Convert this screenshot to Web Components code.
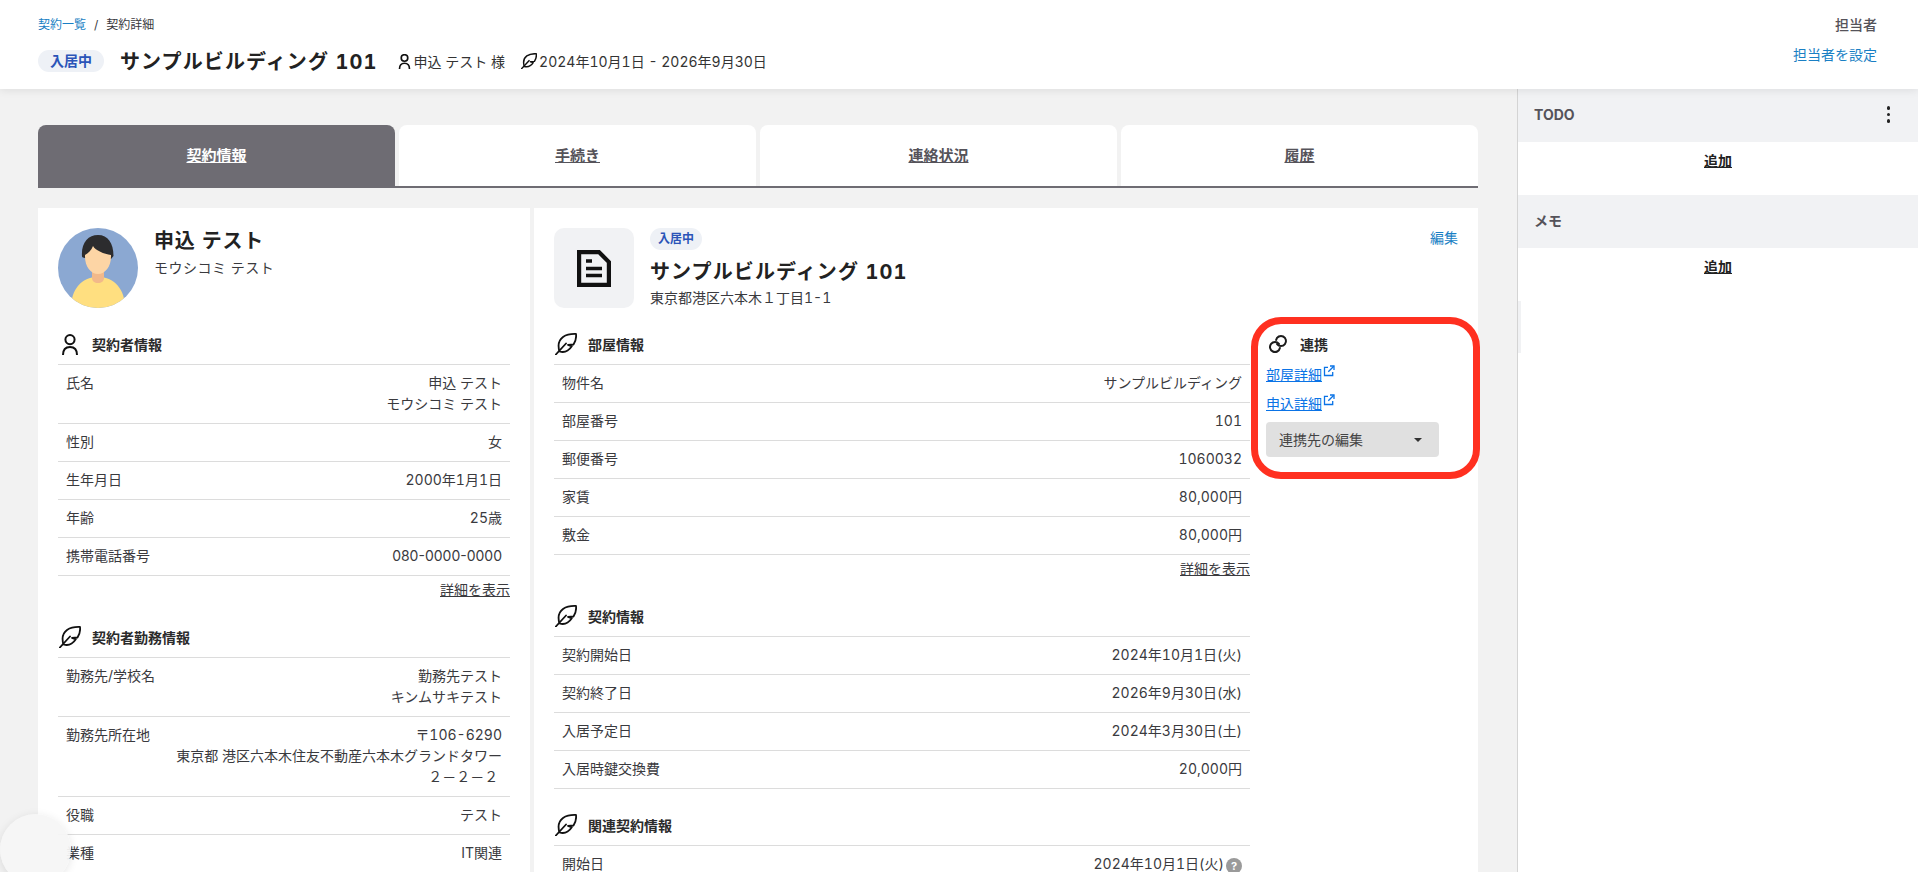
<!DOCTYPE html>
<html lang="ja">
<head>
<meta charset="utf-8">
<title>契約詳細</title>
<style>
  html, body {
    margin: 0;
    height: 100%;
    overflow: hidden;
    font-family: Inter, "Noto Sans CJK JP", sans-serif;
    font-feature-settings: "tnum";
    font-variant-numeric: tabular-nums;
    font-size: 14px;
    line-height: 21px;
    color: #3a3a3e;
    background: #f2f2f2;
  }
  .phone { font-feature-settings: normal; font-variant-numeric: normal; }
</style>
</head>
<body>
<contract-page>
  <page-header slot="header"></page-header>

  <tab-bar slot="tabs">
    <tab-item active>契約情報</tab-item>
    <tab-item>手続き</tab-item>
    <tab-item>連絡状況</tab-item>
    <tab-item>履歴</tab-item>
  </tab-bar>

  <person-card slot="person">
    <info-section title="契約者情報" icon="person">
      <info-row label="氏名">申込 テスト<br>モウシコミ テスト</info-row>
      <info-row label="性別">女</info-row>
      <info-row label="生年月日">2000年1月1日</info-row>
      <info-row label="年齢">25歳</info-row>
      <info-row label="携帯電話番号"><span class="phone">080-0000-0000</span></info-row>
      <more-link slot="more">詳細を表示</more-link>
    </info-section>
    <info-section title="契約者勤務情報" icon="feather">
      <info-row label="勤務先/学校名">勤務先テスト<br>キンムサキテスト</info-row>
      <info-row label="勤務先所在地">〒106-6290<br>東京都 港区六本木住友不動産六本木グランドタワー<br>２－２－２&nbsp;</info-row>
      <info-row label="役職">テスト</info-row>
      <info-row label="業種">IT関連</info-row>
    </info-section>
  </person-card>

  <room-card slot="room">
    <info-section title="部屋情報" icon="feather">
      <info-row label="物件名">サンプルビルディング</info-row>
      <info-row label="部屋番号">101</info-row>
      <info-row label="郵便番号">1060032</info-row>
      <info-row label="家賃">80,000円</info-row>
      <info-row label="敷金">80,000円</info-row>
      <more-link slot="more">詳細を表示</more-link>
    </info-section>
    <info-section title="契約情報" icon="feather">
      <info-row label="契約開始日">2024年10月1日(火)</info-row>
      <info-row label="契約終了日">2026年9月30日(水)</info-row>
      <info-row label="入居予定日">2024年3月30日(土)</info-row>
      <info-row label="入居時鍵交換費">20,000円</info-row>
    </info-section>
    <info-section title="関連契約情報" icon="feather">
      <info-row label="開始日">2024年10月1日(火)<help-mark></help-mark></info-row>
    </info-section>
    <link-panel slot="links"></link-panel>
  </room-card>

  <side-panel slot="side"></side-panel>
</contract-page>
<float-button></float-button>

<script>
const featherPaths = `
  <path d="M.8 21.500 11 10.500"/>
  <path d="M4.500 18.500C2.500 12 4 7 8 4c4-2.700 8.500-3.200 13-3 .5 4-.5 7.500-2.500 10.500L13 12l3.800 1.300C14 17.500 9.500 20 4.500 18.500z"/>
`
const personPaths = `
  <circle cx="8" cy="5.600" r="4.600"/>
  <path d="M1 21c0-5.300 2.600-8 7-8s7 2.700 7 8"/>
`

const icons = {
  person: `<svg width="16" height="21" viewBox="0 0 16 21" fill="none" stroke="#111" stroke-width="2">${personPaths}</svg>`,
  feather: `<svg width="22" height="22" viewBox="0 0 22 22" fill="none" stroke="#111" stroke-width="1.800" stroke-linejoin="round" stroke-linecap="round">${featherPaths}</svg>`,
  small: `<svg width="16" height="16" viewBox="0 0 22 22" fill="none" stroke="#111" stroke-width="2" stroke-linejoin="round" stroke-linecap="round">${featherPaths}</svg>`,
  tiny: `<svg width="13" height="15" viewBox="0 0 16 21" fill="none" stroke="#111" stroke-width="2.300">${personPaths}</svg>`,
  link: `<svg width="20" height="20" viewBox="0 0 20 20" fill="none" stroke="#1c1c1c" stroke-width="2" stroke-linecap="round">
    <path d="M8.110 5.960A5 5 0 1 1 9.060 10.080"/>
    <path d="M11.890 14.040A5 5 0 1 1 10.940 9.920"/>
  </svg>`,
  external: `<svg width="12" height="12" viewBox="0 0 12 12" fill="none" stroke="#0a73e6" stroke-width="1.300">
    <path d="M5 2.300H1.500v8.200h8.200V7"/>
    <path d="M7 1h4v4"/>
    <path d="M10.800 1.200 5.300 6.700"/>
  </svg>`,
  doc: `<svg width="34" height="37" viewBox="0 0 34 37" fill="none" stroke="#111" stroke-width="4.200">
    <path d="M2.100 2.100H22L31.900 12v22.900H2.100z"/>
    <path d="M9 11h6M9 18.500h16M9 25.500h16" stroke-width="3.300"/>
  </svg>`
}

class ContractPage extends HTMLElement {
  constructor() {
    super()
    this.attachShadow({ mode: "open" }).innerHTML = `
      <style>
        :host { display: flex; flex-direction: column; height: 100vh; }
        #body { display: flex; flex: 1; min-height: 0; }
        #main { flex: 1; min-width: 0; padding: 36px 39px 0 38px; overflow: hidden; }
        #cards { display: grid; grid-template-columns: 492px 1fr; gap: 4px; margin-top: 20px; }
      </style>
      <slot name="header"></slot>
      <div id="body">
        <div id="main">
          <slot name="tabs"></slot>
          <div id="cards">
            <slot name="person"></slot>
            <slot name="room"></slot>
          </div>
        </div>
        <slot name="side"></slot>
      </div>
    `
  }
}

class PageHeader extends HTMLElement {
  constructor() {
    super()
    this.attachShadow({ mode: "open" }).innerHTML = `
      <style>
        :host {
          display: flex;
          justify-content: space-between;
          height: 89px;
          padding: 0 41px 0 38px;
          box-sizing: border-box;
          background: #fff;
          box-shadow: 0 2px 8px rgba(0, 0, 0, .08);
          position: relative;
          z-index: 2;
        }
        a { color: #1a7fc4; text-decoration: none; }
        #crumbs { font-size: 12px; line-height: 18px; padding-top: 16px; color: #3a3a3e; }
        #crumbs span { margin: 0 8px; }
        #line { display: flex; align-items: center; height: 22px; margin-top: 16px; }
        #badge {
          width: 66px; height: 22px; border-radius: 11px; background: #eef1f6;
          color: #2b54b8; font-weight: 700; line-height: 22px; text-align: center;
        }
        h1 {
          margin: 2px 20px 0 16px; font-size: 20px; font-weight: 700; color: #222;
          letter-spacing: 1.100px; line-height: 28px; white-space: nowrap;
        }
        .meta { display: flex; align-items: center; gap: 3px; color: #333; }
        .meta + .meta { margin-left: 16px; gap: 2px; }
        #right { text-align: right; padding-top: 14px; }
        #who { font-weight: 500; color: #55535a; }
        #right a { display: block; margin-top: 9px; }
      </style>
      <div>
        <div id="crumbs"><a href="#">契約一覧</a><span>/</span>契約詳細</div>
        <div id="line">
          <div id="badge">入居中</div>
          <h1>サンプルビルディング 101</h1>
          <div class="meta">${icons.tiny}申込 テスト 様</div>
          <div class="meta">${icons.small}2024年10月1日 - 2026年9月30日</div>
        </div>
      </div>
      <div id="right">
        <div id="who">担当者</div>
        <a href="#">担当者を設定</a>
      </div>
    `
  }
}

class TabBar extends HTMLElement {
  constructor() {
    super()
    this.attachShadow({ mode: "open" }).innerHTML = `
      <style>
        :host {
          display: grid;
          grid-template-columns: repeat(4, 1fr);
          gap: 4px;
          border-bottom: 2px solid #6e6c73;
        }
      </style>
      <slot></slot>
    `
  }
}

class TabItem extends HTMLElement {
  constructor() {
    super()
    this.attachShadow({ mode: "open" }).innerHTML = `
      <style>
        :host {
          display: block;
          height: 61px;
          line-height: 61px;
          text-align: center;
          font-size: 15px;
          font-weight: 700;
          text-decoration: underline;
          color: #55535a;
          background: #fff;
          border-radius: 8px 8px 0 0;
        }
        :host([active]) { background: #6e6c73; color: #fff; }
      </style>
      <slot></slot>
    `
  }
}

class PersonCard extends HTMLElement {
  constructor() {
    super()
    this.attachShadow({ mode: "open" }).innerHTML = `
      <style>
        :host { display: block; background: #fff; padding: 20px 20px 0; height: 700px; }
        #top { display: flex; height: 80px; gap: 16px; }
        #name { margin-top: 1px; font-size: 20px; font-weight: 700; color: #222; line-height: 24px; letter-spacing: .8px; }
        #kana { margin-top: 4px; color: #3a3a3e; letter-spacing: .5px; }
        svg { display: block; }
      </style>
      <div id="top">
        <svg width="80" height="80" viewBox="0 0 80 80">
          <defs><clipPath id="c"><circle cx="40" cy="40" r="40"/></clipPath></defs>
          <g clip-path="url(#c)">
            <rect width="80" height="80" fill="#8ba8d2"/>
            <path d="M13 80c0-18 10-31 27-31s27 13 27 31z" fill="#ffdf80"/>
            <path d="M34 42h12v8c0 3-2.500 5-6 5s-6-2-6-5z" fill="#f2b98a"/>
            <path d="M27 30c-1.500-.5-3-.5-3-1.500C23 15 30 7 40 7s15.500 8 15.500 21l-2.500 3z" fill="#2c2c2e"/>
            <path d="M27 27c3-1.500 6.500-5 8-9 2.500 4.500 11 8 18 9 .5 11-5.500 19-13 19S26.500 38 27 27z" fill="#fdd5a5"/>
          </g>
        </svg>
        <div>
          <div id="name">申込 テスト</div>
          <div id="kana">モウシコミ テスト</div>
        </div>
      </div>
      <slot></slot>
    `
  }
}

class RoomCard extends HTMLElement {
  constructor() {
    super()
    this.attachShadow({ mode: "open" }).innerHTML = `
      <style>
        :host { display: block; background: #fff; padding: 20px 20px 0; height: 700px; position: relative; }
        #top { display: flex; height: 80px; gap: 16px; }
        #tile {
          width: 80px; height: 80px; border-radius: 10px; background: #f1f2f4;
          display: flex; align-items: center; justify-content: center;
        }
        #tile svg { display: block; }
        #badge {
          display: inline-block; height: 22px; width: 52px; border-radius: 11px; background: #eef1f6;
          color: #2b54b8; font-size: 12px; font-weight: 700; line-height: 22px; text-align: center;
          vertical-align: top;
        }
        h2 { margin: 8px 0 1px; font-size: 20px; font-weight: 700; color: #222; letter-spacing: 1.100px; line-height: 28px; }
        #edit { position: absolute; top: 19px; right: 20px; color: #1a7fc4; text-decoration: none; }
        #grid { display: grid; grid-template-columns: 1fr 208px; }
      </style>
      <div id="top">
        <div id="tile">${icons.doc}</div>
        <div>
          <div id="badge">入居中</div>
          <h2>サンプルビルディング 101</h2>
          <div>東京都港区六本木１丁目1-1</div>
        </div>
      </div>
      <a id="edit" href="#">編集</a>
      <div id="grid">
        <div><slot></slot></div>
        <slot name="links"></slot>
      </div>
    `
  }
}

class InfoSection extends HTMLElement {
  constructor() {
    super()
    this.attachShadow({ mode: "open" }).innerHTML = `
      <style>
        :host { display: block; margin-top: 24px; }
        #head {
          display: flex; align-items: center; height: 24px; padding-bottom: 8px;
          font-weight: 700; color: #2b2b2b; border-bottom: 1px solid #dcdcdc;
        }
        #icon { display: flex; align-items: center; width: 34px; box-sizing: border-box; padding-left: 4px; }
        #icon svg { display: block; }
        #icon.feather { padding-left: 1px; }
      </style>
      <div id="head"><div id="icon"></div><div id="title"></div></div>
      <slot></slot>
      <slot name="more"></slot>
    `
  }

  connectedCallback() {
    const name = this.getAttribute("icon")
    const icon = this.shadowRoot.getElementById("icon")
    icon.innerHTML = icons[name]
    icon.className = name
    this.shadowRoot.getElementById("title").textContent = this.getAttribute("title")
  }
}

class InfoRow extends HTMLElement {
  constructor() {
    super()
    this.attachShadow({ mode: "open" }).innerHTML = `
      <style>
        :host {
          display: flex; justify-content: space-between;
          padding: 7px 8px 9px;
          border-bottom: 1px solid #dcdcdc;
        }
        #value { text-align: right; white-space: nowrap; color: #3a3a3e; }
      </style>
      <div id="label"></div>
      <div id="value"><slot></slot></div>
    `
  }

  connectedCallback() {
    this.shadowRoot.getElementById("label").textContent = this.getAttribute("label")
  }
}

class MoreLink extends HTMLElement {
  constructor() {
    super()
    this.attachShadow({ mode: "open" }).innerHTML = `
      <style>
        :host { display: block; height: 25px; padding-top: 3px; box-sizing: border-box; text-align: right; text-decoration: underline; color: #3a3a3e; }
      </style>
      <slot></slot>
    `
  }
}

class HelpMark extends HTMLElement {
  constructor() {
    super()
    this.attachShadow({ mode: "open" }).innerHTML = `
      <style>
        :host {
          display: inline-block; width: 16px; height: 16px; margin-left: 2px; border-radius: 50%;
          background: #9a9a9a; color: #fff; font-size: 11px; font-weight: 700; line-height: 16px;
          text-align: center; vertical-align: -1px;
        }
      </style>?
    `
  }
}

class LinkPanel extends HTMLElement {
  constructor() {
    super()
    this.attachShadow({ mode: "open" }).innerHTML = `
      <style>
        :host { display: block; position: relative; margin-top: 24px; padding-left: 16px; }
        #head { display: flex; align-items: center; height: 24px; font-weight: 700; color: #2b2b2b; gap: 12px; margin-bottom: 8px; }
        #head svg { display: block; margin-left: 2px; }
        a { display: flex; align-items: flex-start; height: 29px; color: #0a73e6; }
        a span { text-decoration: underline; }
        a svg { margin-left: 1px; margin-top: 1px; }
        #select {
          display: flex; align-items: center; justify-content: space-between;
          width: 173px; height: 35px; box-sizing: border-box; padding: 0 17px 0 13px;
          background: #e0e0e0; border-radius: 4px; color: #444;
        }
        #caret { width: 0; height: 0; border: 4px solid transparent; border-top: 4.500px solid #333; border-bottom: 0; }
        #mark {
          position: absolute; left: 1px; top: -15px; width: 229px; height: 162px; box-sizing: border-box;
          border: 7px solid #ff3020; border-radius: 30px;
        }
      </style>
      <div id="head">${icons.link}<div>連携</div></div>
      <a href="#"><span>部屋詳細</span>${icons.external}</a>
      <a href="#"><span>申込詳細</span>${icons.external}</a>
      <div id="select"><div>連携先の編集</div><div id="caret"></div></div>
      <div id="mark"></div>
    `
  }
}

class SidePanel extends HTMLElement {
  constructor() {
    super()
    this.attachShadow({ mode: "open" }).innerHTML = `
      <style>
        :host {
          display: block; width: 400px; background: #fff;
          border-left: 1px solid #d4d4d4; position: relative;
        }
        .head {
          display: flex; justify-content: space-between; align-items: center;
          height: 51px; padding: 0 28px 2px 16px; background: #f1f2f4;
          font-weight: 700; color: #55535a;
        }
        .add { height: 53px; padding-top: 8px; box-sizing: border-box; text-align: center; font-weight: 700; color: #222; text-decoration: underline; }
        #dots { display: flex; flex-direction: column; gap: 3px; }
        #dots i { display: block; width: 3.500px; height: 3.500px; border-radius: 50%; background: #222; }
        #handle { position: absolute; left: 0; top: 212px; width: 3px; height: 52px; background: #f1f2f4; }
      </style>
      <div class="head"><div>TODO</div><div id="dots"><i></i><i></i><i></i></div></div>
      <div class="add">追加</div>
      <div class="head"><div>メモ</div></div>
      <div class="add">追加</div>
      <div id="handle"></div>
    `
  }
}

class FloatButton extends HTMLElement {
  constructor() {
    super()
    this.attachShadow({ mode: "open" }).innerHTML = `
      <style>
        :host {
          position: fixed; left: 0; top: 814px; width: 71px; height: 71px; border-radius: 50%;
          background: rgba(245, 245, 245, .94); box-shadow: 0 2px 10px rgba(0, 0, 0, .1);
        }
      </style>
    `
  }
}

customElements.define("contract-page", ContractPage)
customElements.define("page-header", PageHeader)
customElements.define("tab-bar", TabBar)
customElements.define("tab-item", TabItem)
customElements.define("person-card", PersonCard)
customElements.define("room-card", RoomCard)
customElements.define("info-section", InfoSection)
customElements.define("info-row", InfoRow)
customElements.define("more-link", MoreLink)
customElements.define("help-mark", HelpMark)
customElements.define("link-panel", LinkPanel)
customElements.define("side-panel", SidePanel)
customElements.define("float-button", FloatButton)
</script>
</body>
</html>
